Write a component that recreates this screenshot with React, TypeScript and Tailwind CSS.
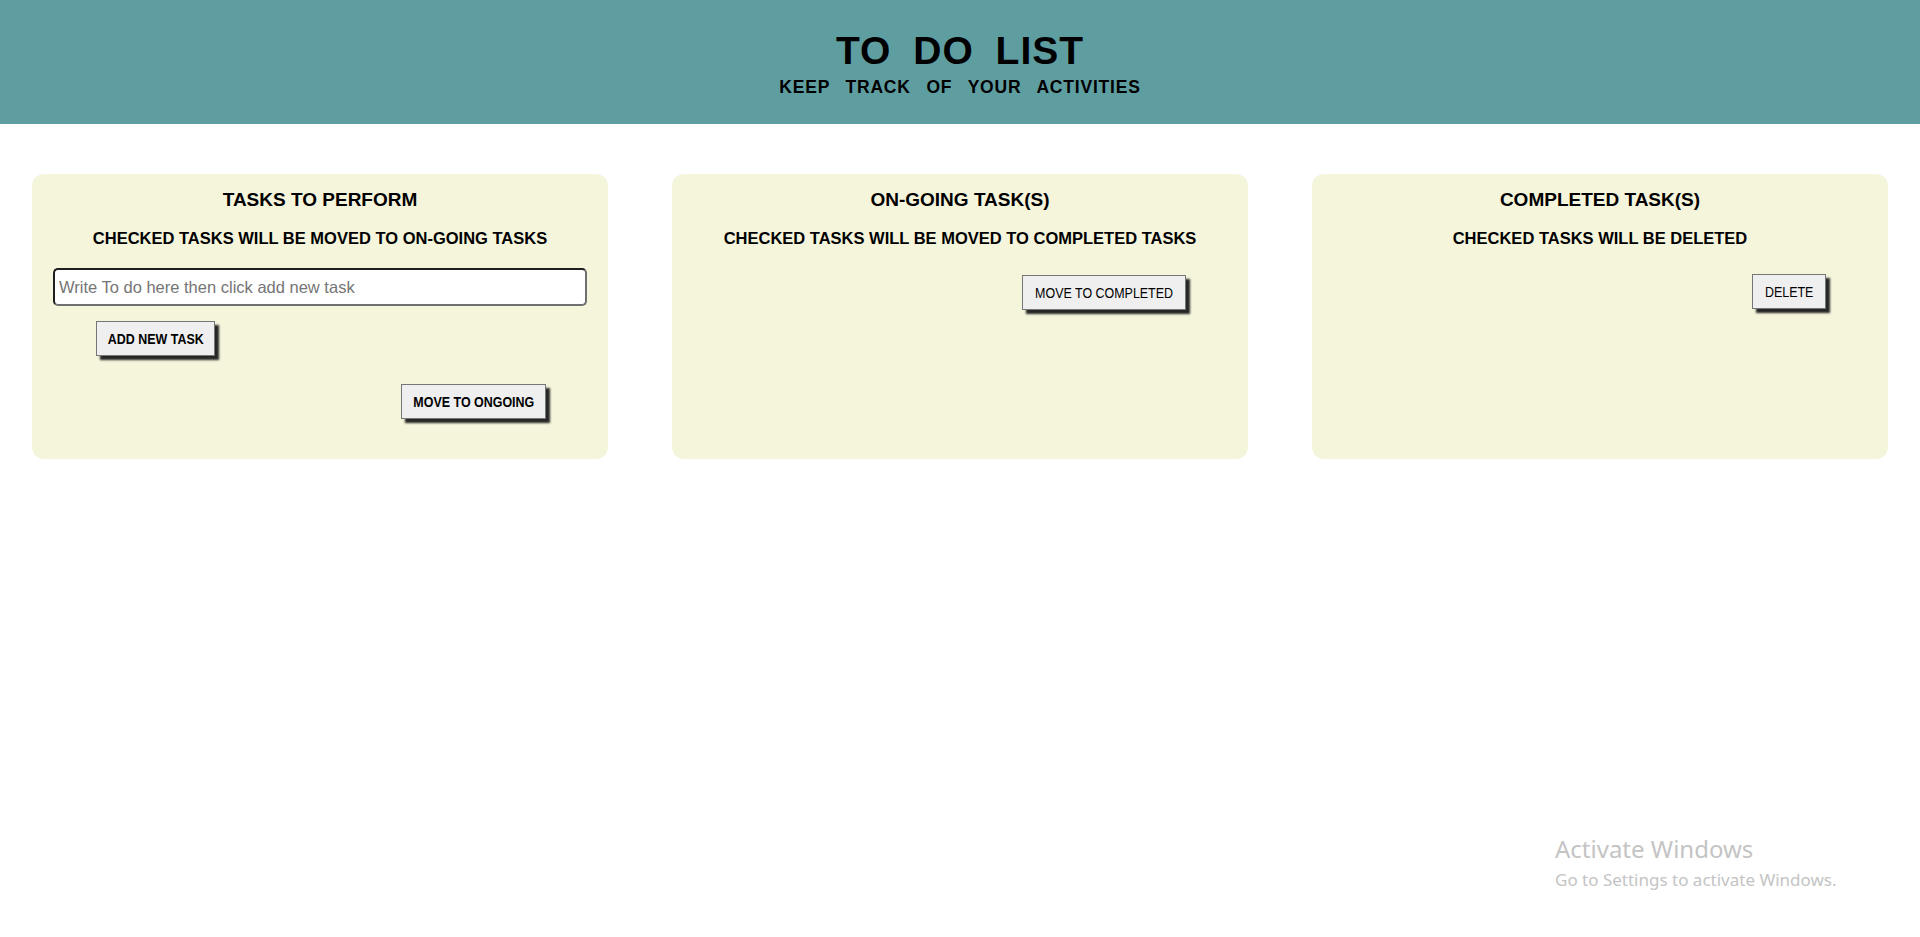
import React from "react";

const btn =
  "h-[35px] flex items-center justify-center bg-[#efefef] border border-[#767676] shadow-[4px_4px_2px_#262626] text-black leading-none whitespace-nowrap";

function Label({ children, className }: { children: React.ReactNode; className: string }) {
  // button text in the shot is a condensed face; squeeze Liberation Sans to match
  return <span className={"inline-block shrink-0 whitespace-nowrap " + className}>{children}</span>;
}

function Card({
  title,
  note,
  children,
}: {
  title: string;
  note: string;
  children?: React.ReactNode;
}) {
  return (
    <section className="h-[285px] rounded-[12px] bg-[#f5f5dc] pt-[15px]">
      <h3 className="text-center text-[19px] leading-[21.5px] font-bold">{title}</h3>
      <h4 className="mt-[18.5px] text-center text-[16.5px] leading-[18.4px] font-bold">{note}</h4>
      {children}
    </section>
  );
}

export default function App() {
  return (
    <div className="relative min-h-[937px] bg-white text-black font-['Liberation_Sans',Arial,sans-serif]">
      <header className="h-[124px] bg-[#5f9ea0] flex flex-col items-center pt-[30px]">
        <h1 className="text-[39px] leading-[42px] font-bold tracking-[1px] [word-spacing:10px]">TO DO LIST</h1>
        <p className="mt-[5px] text-[17.5px] leading-[20px] font-bold tracking-[0.8px] [word-spacing:10px]">
          KEEP TRACK OF YOUR ACTIVITIES
        </p>
      </header>

      <main className="grid grid-cols-3 gap-[64px] px-[32px] pt-[50px]">
        <Card title="TASKS TO PERFORM" note="CHECKED TASKS WILL BE MOVED TO ON-GOING TASKS">
          <div className="px-[21px] mt-[21px]">
            <input
              type="text"
              placeholder="Write To do here then click add new task"
              className="block w-full h-[38px] bg-white rounded-[5px] border-2 border-t-[#1e1e1e] border-l-[#1e1e1e] border-b-[#707070] border-r-[#707070] px-[4px] text-[16.5px] placeholder:text-[#757575] outline-none"
            />
          </div>
          <div className="mt-[15px] pl-[64px]">
            <button className={btn + " w-[119px]"}>
              <Label className="text-[15px] font-bold scale-x-[0.83]">ADD NEW TASK</Label>
            </button>
          </div>
          <div className="mt-[28px] flex justify-end pr-[62px]">
            <button className={btn + " w-[145px]"}>
              <Label className="text-[15px] font-bold scale-x-[0.83]">MOVE TO ONGOING</Label>
            </button>
          </div>
        </Card>

        <Card title="ON-GOING TASK(S)" note="CHECKED TASKS WILL BE MOVED TO COMPLETED TASKS">
          <div className="mt-[27.5px] flex justify-end pr-[62px]">
            <button className={btn + " w-[164px]"}>
              <Label className="text-[15px] scale-x-[0.83]">MOVE TO COMPLETED</Label>
            </button>
          </div>
        </Card>

        <Card title="COMPLETED TASK(S)" note="CHECKED TASKS WILL BE DELETED">
          <div className="mt-[27px] flex justify-end pr-[62px]">
            <button className={btn + " w-[74px]"}>
              <Label className="text-[15px] scale-x-[0.83]">DELETE</Label>
            </button>
          </div>
        </Card>
      </main>

      {/* OS watermark overlay */}
      <div className="pointer-events-none absolute left-[1555px] top-[835px] text-[#c4c4c4] font-['Noto_Sans',sans-serif]">
        <div className="text-[24px] leading-[28px]">Activate Windows</div>
        <div className="mt-[7px] text-[17px] leading-[20px]">Go to Settings to activate Windows.</div>
      </div>
    </div>
  );
}
